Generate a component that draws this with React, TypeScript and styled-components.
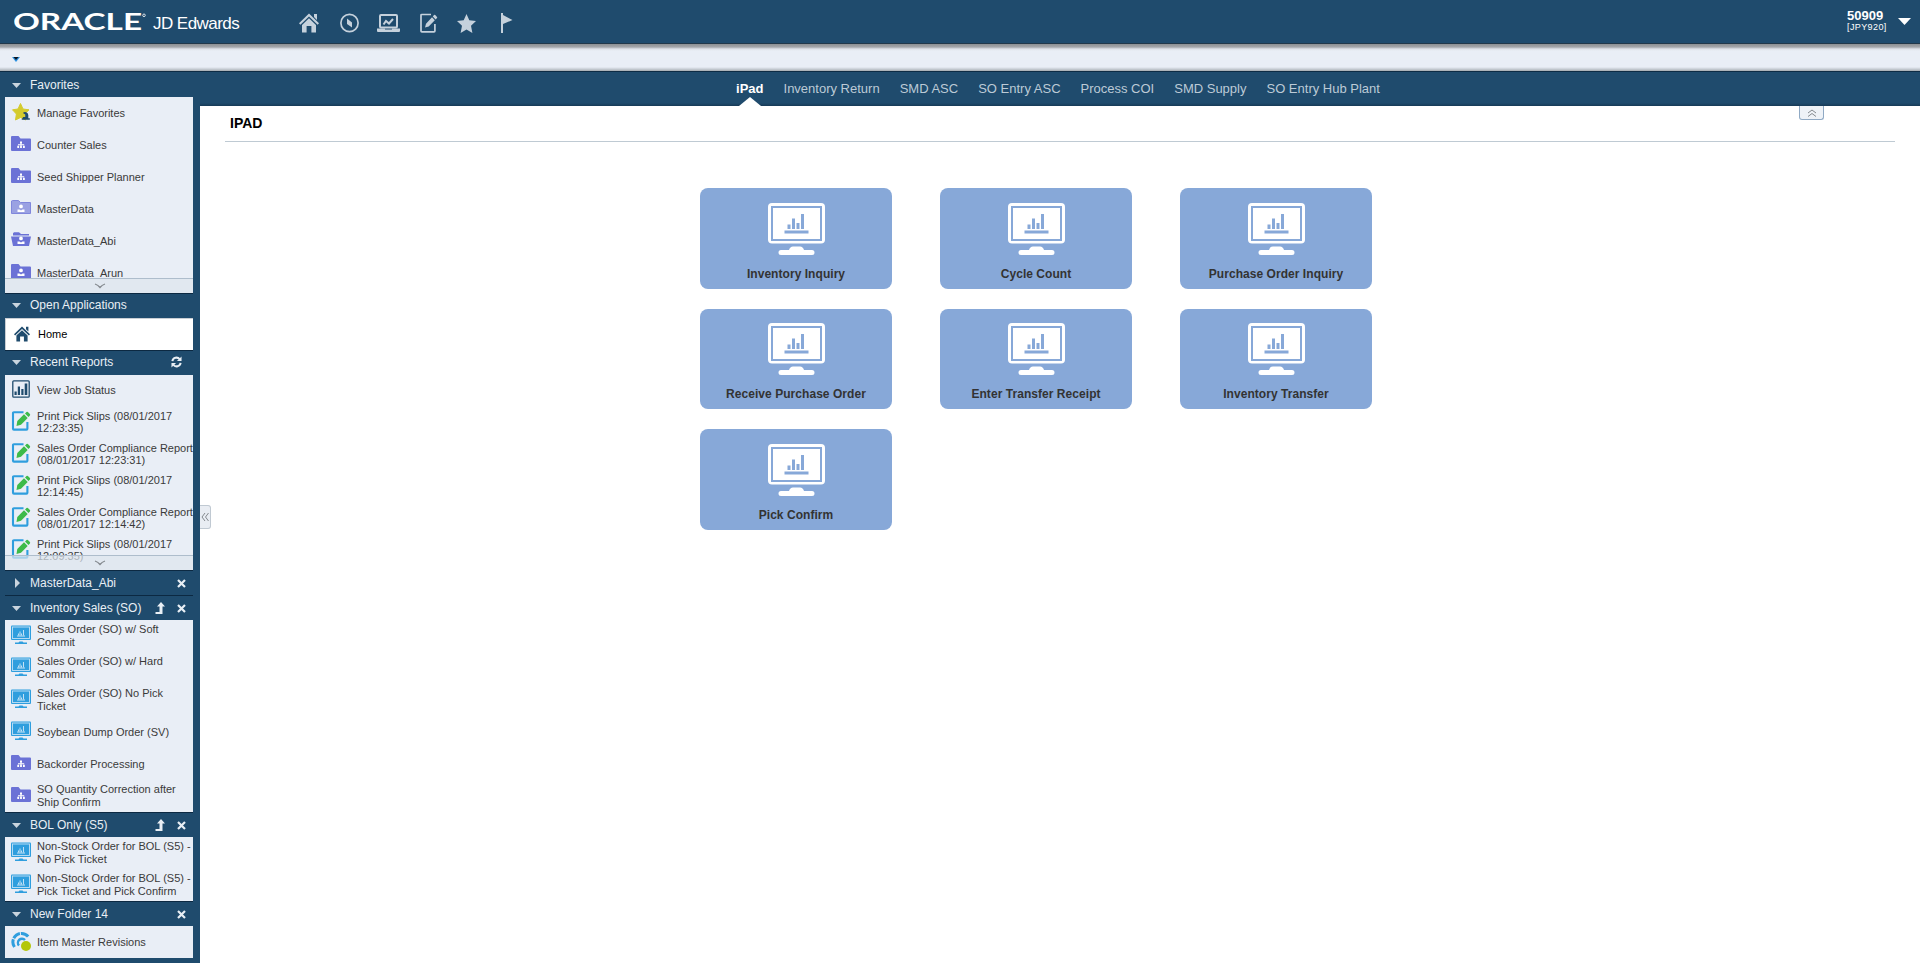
import React from "react";
import styled, { createGlobalStyle } from "styled-components";

const Global = createGlobalStyle`
  *{box-sizing:border-box}
  html,body{margin:0;padding:0}
  body{font-family:"Liberation Sans",Arial,sans-serif;background:#fff;overflow:hidden}
`;
const Page = styled.div`height:963px;display:flex;flex-direction:column;overflow:hidden;`;
const Header = styled.header`
  height:44px;flex:none;background:#1f4b6d;border-bottom:1px solid #22384a;display:flex;align-items:center;
  padding:0 9px 0 14px;color:#fff;
`;
const Product = styled.span`font-size:17px;letter-spacing:-0.55px;margin-left:5px;padding-top:4px;width:146px;white-space:nowrap;`;
const HeaderIcons = styled.nav`display:flex;align-items:center;padding-top:3px;color:#c5d1dc;svg{display:block}`;
const User = styled.div`margin-left:auto;width:51px;line-height:11px;font-size:9px;letter-spacing:.4px;white-space:nowrap;
  strong{display:block;font-size:13px;letter-spacing:0;line-height:12px;}`;
const Strip = styled.div`
  height:27px;flex:none;padding:13px 0 0 12px;
  background:linear-gradient(#8d9093 0,#a3a6aa 3px,#dfe3e9 5px,#e9eef6 7px,#e9eef6 23px,#c9cfd6 25px,#a5abb0 27px);
  svg{display:block}
`;
const Body = styled.div`flex:1;display:flex;min-height:0;`;
const Sidebar = styled.aside`width:200px;background:#1f4b6d;padding:0 7px 0 5px;flex:none;border-top:1px solid #0e2c45;`;
const SectionHead = styled.div<{ $first?: boolean; $raise?: boolean }>`
  height:25px;border-top:1px solid ${p => (p.$first ? "transparent" : "#0c2942")};
  display:flex;align-items:center;padding:0 7px ${p => (p.$raise ? 2 : 0)}px 7px;color:#e9eff5;font-size:12px;
  span{margin-left:9px;flex:1;white-space:nowrap}
  svg{display:block;flex:none}
`;
const HeadTools = styled.div<{ $wide?: boolean }>`display:flex;gap:12px;align-items:center;padding-right:${p => (p.$wide ? 4 : 0)}px;`;
const List = styled.div<{ $h?: number }>`
  background:#e9eef6;overflow:hidden;position:relative;${p => (p.$h ? `height:${p.$h}px;` : "")}
`;
const Item = styled.div<{ $tight?: boolean }>`
  height:32px;display:flex;align-items:center;padding:0 0 ${p => (p.$tight ? 2 : 0)}px 6px;color:#3a3a3a;font-size:11px;
  line-height:${p => (p.$tight ? 12 : 13)}px;white-space:pre;
  svg{flex:none;display:block;margin:-2px 6px 0 0}
`;
const HomeItem = styled.div`
  height:32px;background:#fff;border:solid #c9ced4;border-width:1px 0 0 1px;display:flex;align-items:center;
  font-size:11px;color:#000;padding:0 0 2px 8px;gap:8px;
  svg{color:#1f4b6d}
`;
const More = styled.div`
  position:absolute;left:0;right:0;bottom:0;height:15px;background:rgba(221,229,238,.7);border-top:1px solid #aebdcc;
  display:flex;justify-content:center;align-items:center;padding-left:1px;
`;
const Main = styled.main`flex:1;position:relative;min-width:0;`;
const Tabs = styled.nav`
  height:35px;background:linear-gradient(#1f4b6d 31px,#14344f 35px);border-top:1px solid #0e2c45;
  display:flex;justify-content:center;gap:20px;line-height:33px;font-size:13px;padding-right:4px;
`;
const Tab = styled.span<{ $on?: boolean }>`
  position:relative;color:${p => (p.$on ? "#fff" : "#bccad6")};font-weight:${p => (p.$on ? 700 : 400)};white-space:nowrap;
  ${p => p.$on && `&::after{content:"";position:absolute;left:50%;margin-left:-11px;bottom:0;border:solid transparent;border-width:0 11px 9px;border-bottom-color:#fff}`}
`;
const Title = styled.h1`
  margin:0 25px;height:36px;border-bottom:1px solid #bfcad3;font-size:14px;line-height:34px;padding-left:5px;color:#000;
`;
const Grid = styled.div`
  display:grid;grid-template-columns:repeat(3,192px);grid-template-rows:101px 100px 101px;column-gap:48px;row-gap:20px;
  justify-content:center;padding-top:46px;margin-left:-48px;
`;
const Tile = styled.div`
  border-radius:8px;background:#87a8d8;display:flex;flex-direction:column;align-items:center;
  justify-content:flex-end;padding-bottom:8px;font-size:12px;line-height:14px;font-weight:700;color:#333;letter-spacing:.05px;
  svg{display:block;margin-bottom:12px;margin-left:1px}
`;
const CollapseTop = styled.div`
  position:absolute;right:96px;top:35px;width:25px;height:14px;border:1px solid #8fa9c4;border-top:0;border-radius:0 0 3px 3px;
  background:#eef2f7;display:flex;justify-content:center;align-items:center;
`;
const CollapseSide = styled.div`
  position:absolute;left:0;top:434px;width:11px;height:24px;border:1px solid #c0c9d2;border-left:0;border-radius:0 3px 3px 0;
  background:#e9edf3;display:flex;justify-content:center;align-items:center;
`;

const Logo = () => (
  <svg width="134" height="30" viewBox="0 0 134 30">
    <text x="-1" y="22.500" fontFamily="Lato, sans-serif" fontWeight="700" fontSize="22" fill="#fff" textLength="129" lengthAdjust="spacingAndGlyphs">ORACLE</text>
    <circle cx="130" cy="8.300" r="1.300" fill="none" stroke="#fff" strokeWidth=".8" />
  </svg>
);
const HomeIcon = ({ size = 20 }: { size?: number }) => (
  <svg width={size} height={size} viewBox="0 0 20 20" fill="currentColor">
    <path d="M10 .5 20 10.300 18.600 11.800 10 3.600 1.400 11.800 0 10.300ZM15 1h3v6l-3-3Z" />
    <path d="M10 5.200 17 12v7.500h-4.600v-6.500H7.600v6.500H3V12Z" />
  </svg>
);
const ToolbarSlot = styled.span<{ $gap?: number }>`display:block;margin-left:${p => p.$gap || 0}px;`;
const CompassIcon = () => (
  <svg width="19" height="20" viewBox="0 0 19 20">
    <circle cx="9.500" cy="10" r="8.600" fill="none" stroke="currentColor" strokeWidth="1.700" />
    <path d="M7 5.500 12 9.500V14.500L7 11Z" fill="currentColor" />
  </svg>
);
const LaptopIcon = () => (
  <svg width="23" height="18" viewBox="0 0 23 18">
    <rect x="3" y="1" width="17" height="12.500" rx="1" fill="none" stroke="currentColor" strokeWidth="2" />
    <path d="M6.500 10.500 9 7 12 9.500 16 5" fill="none" stroke="currentColor" strokeWidth="2" />
    <path d="M0 14.500H8V15.500H15V14.500H23V17q0 1-1 1H1Q0 18 0 17Z" fill="currentColor" />
  </svg>
);
const ComposeIcon = () => (
  <svg width="18" height="20" viewBox="0 0 18 20">
    <path d="M11 1.500H1.900Q1 1.500 1 2.400V18q0 .9.900.9H14q.9 0 .9-.9V11" fill="none" stroke="currentColor" strokeWidth="1.700" />
    <path d="M5 14.500 6 10.800 12 4.300 14.800 7.200 8.700 13.500ZM12.800 3.500 14 2.100q.6-.5 1.200 0L17 3.900q.5.500 0 1.100L15.600 6.400Z" fill="currentColor" />
  </svg>
);
const StarIcon = () => (
  <svg width="19" height="19" viewBox="0 0 19 19"><path d="M9.500 0 12.300 6.300 19 7 14 11.800 15.400 19 9.500 15.500 3.600 19 5 11.800 0 7 6.700 6.300Z" fill="currentColor" /></svg>
);
const FlagIcon = () => (
  <svg width="13" height="20" viewBox="0 0 13 20"><path d="M1 0h2v2L12.500 7 3 11V20H1Z" fill="currentColor" /></svg>
);
const Down = ({ w = 9, h = 5, c = "#c9d4de" }) => (
  <svg width={w} height={h} viewBox="0 0 10 5" preserveAspectRatio="none"><path d="M0 0h10L5 5Z" fill={c} /></svg>
);
const StripArrow = () => (
  <svg width="8" height="5"><path d="M0 0h8L4 5Z" fill="#2b90e0" /><path d="M1.500 0h5L4 3Z" fill="#0a1420" /></svg>
);
const Right = () => <svg width="9" height="10"><path d="M3 0 8 5 3 10Z" fill="#c9d4de" /></svg>;
const Close = () => <svg width="9" height="9"><path d="M1 1 8 8M8 1 1 8" stroke="#e9eff5" strokeWidth="2.200" /></svg>;
const Up = () => (
  <svg width="10" height="12"><path d="M6 0 10 4.500H7.500V12H0.500V10H4.500V4.500H2Z" fill="#e9eff5" /></svg>
);
const Refresh = () => (
  <svg width="11" height="12" viewBox="0 0 12 12" fill="none" stroke="#e9eff5" strokeWidth="2.200">
    <path d="M1.500 5A4.500 4.500 0 0 1 9.500 3M10.500 7A4.500 4.500 0 0 1 2.500 9" />
    <path d="M11.500 0v5h-5ZM.5 12V7h5Z" fill="#e9eff5" stroke="none" />
  </svg>
);
const Chevron = () => <svg width="12" height="6"><path d="M1 1Q4 2 6 4.500 8 2 11 1" fill="none" stroke="#84898e" strokeWidth="1.300" /></svg>;

type Kind = "star" | "tree" | "light" | "open" | "person" | "job" | "edit" | "mon" | "item";
const Glyph = ({ kind }: { kind: Kind }) => {
  if (kind === "star")
    return (
      <svg width="20" height="20" viewBox="0 0 20 20">
        <path d="M9.500 1.500 12 7l6 .8-4.300 4.200L14.500 18 9.500 15.500 4.500 18l.9-6L1.500 7.800l5.500-.8Z" fill="#d4cb2d" stroke="#d4cb2d" strokeWidth="1" strokeLinejoin="round" />
        <path d="M10.500 17.800h8.300v-1.600h-1.500V13a3.200 3.200 0 0 0-5.400-2l2.300 1.500v2.500h-2Z" fill="#1f4b6d" />
      </svg>
    );
  if (kind === "tree" || kind === "person" || kind === "light" || kind === "open")
    return (
      <svg width="20" height="18" viewBox="0 0 20 18">
        {kind === "open" ? (
          <path d="M2 4.500V2.200L3 1.200h5l2 1.800h8V4.500ZM0 5.500h20l-2 9.500H2Z" fill="#6b72d6" />
        ) : kind === "light" ? (
          <path d="M.5 2l1-.5h6l2 2h10v11H.5Z" fill="#9aa1e2" stroke="#8087dc" />
        ) : (
          <path d="M0 2Q0 1 1 1H7.500L9.500 3.500H19q1 0 1 1V15q0 1-1 1H1q-1 0-1-1Z" fill="#6b72d6" />
        )}
        {kind === "tree" ? (
          <path d="M9 6.500h2v2H9ZM9.500 8.500h1v2.500h-1ZM7 9.300h6.200v.9H7ZM6.300 10.800h1.800V13H6.300ZM9.100 10.800h1.800V13H9.100ZM12 10.800h1.800V13H12Z" fill="#fff" />
        ) : (
          <path d="M10 5.500a1.900 1.900 0 0 1 0 3.800A1.900 1.900 0 0 1 10 5.500ZM6.500 13V10.500h2L10 11.500l1.500-1h2V13Z" fill="#fff" />
        )}
      </svg>
    );
  if (kind === "job")
    return (
      <svg width="20" height="18" viewBox="0 0 20 18">
        <rect x="1.800" y=".8" width="16.400" height="16.400" rx="1" fill="none" stroke="#1f4b6d" strokeWidth="1.300" />
        <path d="M3.500 11.500h2.200V15H3.500ZM6.800 6.500H9V15H6.800ZM10.300 9h2.200v6h-2.200ZM13.700 3.500h2.600V15h-2.600Z" fill="#1f4b6d" />
      </svg>
    );
  if (kind === "edit")
    return (
      <svg width="20" height="20" viewBox="0 0 20 20">
        <path d="M12.500 1.300H2.900Q2 1.300 2 2.200V17.700q0 .9.900.9H15.500q.9 0 .9-.9V11" fill="none" stroke="#2f9ede" strokeWidth="2.100" />
        <path d="M5.500 15 6.300 10 13 3.300 16.700 7 10 13.800ZM14 2.500l1.500-1.500q.7-.6 1.400 0l2 2q.6.700 0 1.400L17.500 6Z" fill="#3dbb49" />
      </svg>
    );
  if (kind === "mon")
    return (
      <svg width="20" height="20" viewBox="0 0 20 20">
        <rect y=".5" width="20" height="14.500" rx="1" fill="#2f9ede" />
        <rect x="1.500" y="2" width="17" height="11.500" fill="none" stroke="#c3e1f5" strokeWidth=".9" />
        <path d="M6 11h8M7.500 10.500V8.500M9 10.500V6.500M10.500 10.500V8.500M12.500 10.500V5" stroke="#c3e1f5" strokeWidth="1" />
        <path d="M4 17.500h3.500L8.500 16.500h3L12.500 17.500H16V19H4Z" fill="#2f9ede" />
      </svg>
    );
  return (
    <svg width="20" height="20" viewBox="0 0 20 20">
      <path d="M3.500 16A8.500 8.500 0 1 1 17.500 6" fill="none" stroke="#2f9ede" strokeWidth="3" strokeDasharray="8 1" />
      <path d="M8 14.500A4 4 0 1 1 14 9" fill="none" stroke="#2f9ede" strokeWidth="2.400" />
      <circle cx="15" cy="15" r="5" fill="#b4c60a" />
    </svg>
  );
};

const BigMonitor = () => (
  <svg width="57" height="52" viewBox="0 0 57 52">
    <rect width="57" height="40.500" rx="4" fill="#fff" />
    <rect x="4" y="4" width="49" height="33" fill="none" stroke="#87a8d8" strokeWidth="2" />
    <path d="M19.500 21.500h3V26h-3ZM24 15.500h3V26h-3ZM28.500 20h3v6h-3ZM33 11h3v15h-3ZM16.500 27.500h24v3h-24Z" fill="#87a8d8" />
    <path d="M13 47H21Q22 43.500 25 43.500h7Q35 43.500 36 47h8a2.500 2.500 0 0 1 0 5H13a2.500 2.500 0 0 1 0-5Z" fill="#fff" />
  </svg>
);

const Section = ({ title, tools = "", closed, first, raise, children }: { title: string; tools?: string; closed?: boolean; first?: boolean; raise?: boolean; children?: React.ReactNode }) => (
  <>
    <SectionHead $first={first} $raise={raise}>
      {closed ? <Right /> : <Down />}
      <span>{title}</span>
      <HeadTools $wide={tools === "r"}>
        {tools.includes("r") && <Refresh />}
        {tools.includes("u") && <Up />}
        {tools.includes("x") && <Close />}
      </HeadTools>
    </SectionHead>
    {children}
  </>
);
const favorites: [Kind, string][] = [
  ["star", "Manage Favorites"], ["tree", "Counter Sales"], ["tree", "Seed Shipper Planner"],
  ["light", "MasterData"], ["open", "MasterData_Abi"], ["person", "MasterData_Arun"],
];
const reports: [Kind, string][] = [
  ["job", "View Job Status"],
  ["edit", "Print Pick Slips (08/01/2017\n12:23:35)"],
  ["edit", "Sales Order Compliance Report\n(08/01/2017 12:23:31)"],
  ["edit", "Print Pick Slips (08/01/2017\n12:14:45)"],
  ["edit", "Sales Order Compliance Report\n(08/01/2017 12:14:42)"],
  ["edit", "Print Pick Slips (08/01/2017\n12:09:35)"],
];
const sales: [Kind, string][] = [
  ["mon", "Sales Order (SO) w/ Soft\nCommit"], ["mon", "Sales Order (SO) w/ Hard\nCommit"],
  ["mon", "Sales Order (SO) No Pick\nTicket"], ["mon", "Soybean Dump Order (SV)"],
  ["tree", "Backorder Processing"], ["tree", "SO Quantity Correction after\nShip Confirm"],
];
const bol: [Kind, string][] = [
  ["mon", "Non-Stock Order for BOL (S5) -\nNo Pick Ticket"],
  ["mon", "Non-Stock Order for BOL (S5) -\nPick Ticket and Pick Confirm"],
];
const Items = ({ rows, tight }: { rows: [Kind, string][]; tight?: boolean }) => (
  <>{rows.map(([k, t]) => <Item key={t} $tight={tight}><Glyph kind={k} />{t}</Item>)}</>
);

export default function App() {
  return (
    <Page>
      <Global />
      <Header>
        <Logo />
        <Product>JD Edwards</Product>
        <HeaderIcons>
          <ToolbarSlot><HomeIcon /></ToolbarSlot>
          <ToolbarSlot $gap={21}><CompassIcon /></ToolbarSlot>
          <ToolbarSlot $gap={18}><LaptopIcon /></ToolbarSlot>
          <ToolbarSlot $gap={20}><ComposeIcon /></ToolbarSlot>
          <ToolbarSlot $gap={19}><StarIcon /></ToolbarSlot>
          <ToolbarSlot $gap={24}><FlagIcon /></ToolbarSlot>
        </HeaderIcons>
        <User><strong>50909</strong>[JPY920]</User>
        <Down w={13} h={7} c="#fff" />
      </Header>
      <Strip><StripArrow /></Strip>
      <Body>
        <Sidebar>
          <Section title="Favorites" first><List $h={196}><Items rows={favorites} /><More><Chevron /></More></List></Section>
          <Section title="Open Applications" raise><HomeItem><HomeIcon size={16} />Home</HomeItem></Section>
          <Section title="Recent Reports" tools="r" raise><List $h={195}><Items rows={reports} tight /><More><Chevron /></More></List></Section>
          <Section title="MasterData_Abi" tools="x" closed />
          <Section title="Inventory Sales (SO)" tools="ux"><List><Items rows={sales} /></List></Section>
          <Section title="BOL Only (S5)" tools="ux"><List><Items rows={bol} /></List></Section>
          <Section title="New Folder 14" tools="x"><List><Items rows={[["item", "Item Master Revisions"]]} /></List></Section>
        </Sidebar>
        <Main>
          <Tabs>
            <Tab $on>iPad</Tab>
            {["Inventory Return", "SMD ASC", "SO Entry ASC", "Process COI", "SMD Supply", "SO Entry Hub Plant"].map(t => <Tab key={t}>{t}</Tab>)}
          </Tabs>
          <Title>IPAD</Title>
          <Grid>
            {["Inventory Inquiry", "Cycle Count", "Purchase Order Inquiry", "Receive Purchase Order", "Enter Transfer Receipt", "Inventory Transfer", "Pick Confirm"].map(t => (
              <Tile key={t}><BigMonitor />{t}</Tile>
            ))}
          </Grid>
          <CollapseTop>
            <svg width="10" height="8"><path d="M1 4 5 1 9 4M1 7.500 5 4.500 9 7.500" fill="none" stroke="#84898e" /></svg>
          </CollapseTop>
          <CollapseSide>
            <svg width="8" height="10"><path d="M4 1 1 5 4 9M7.500 1 4.500 5 7.500 9" fill="none" stroke="#84898e" /></svg>
          </CollapseSide>
        </Main>
      </Body>
    </Page>
  );
}
